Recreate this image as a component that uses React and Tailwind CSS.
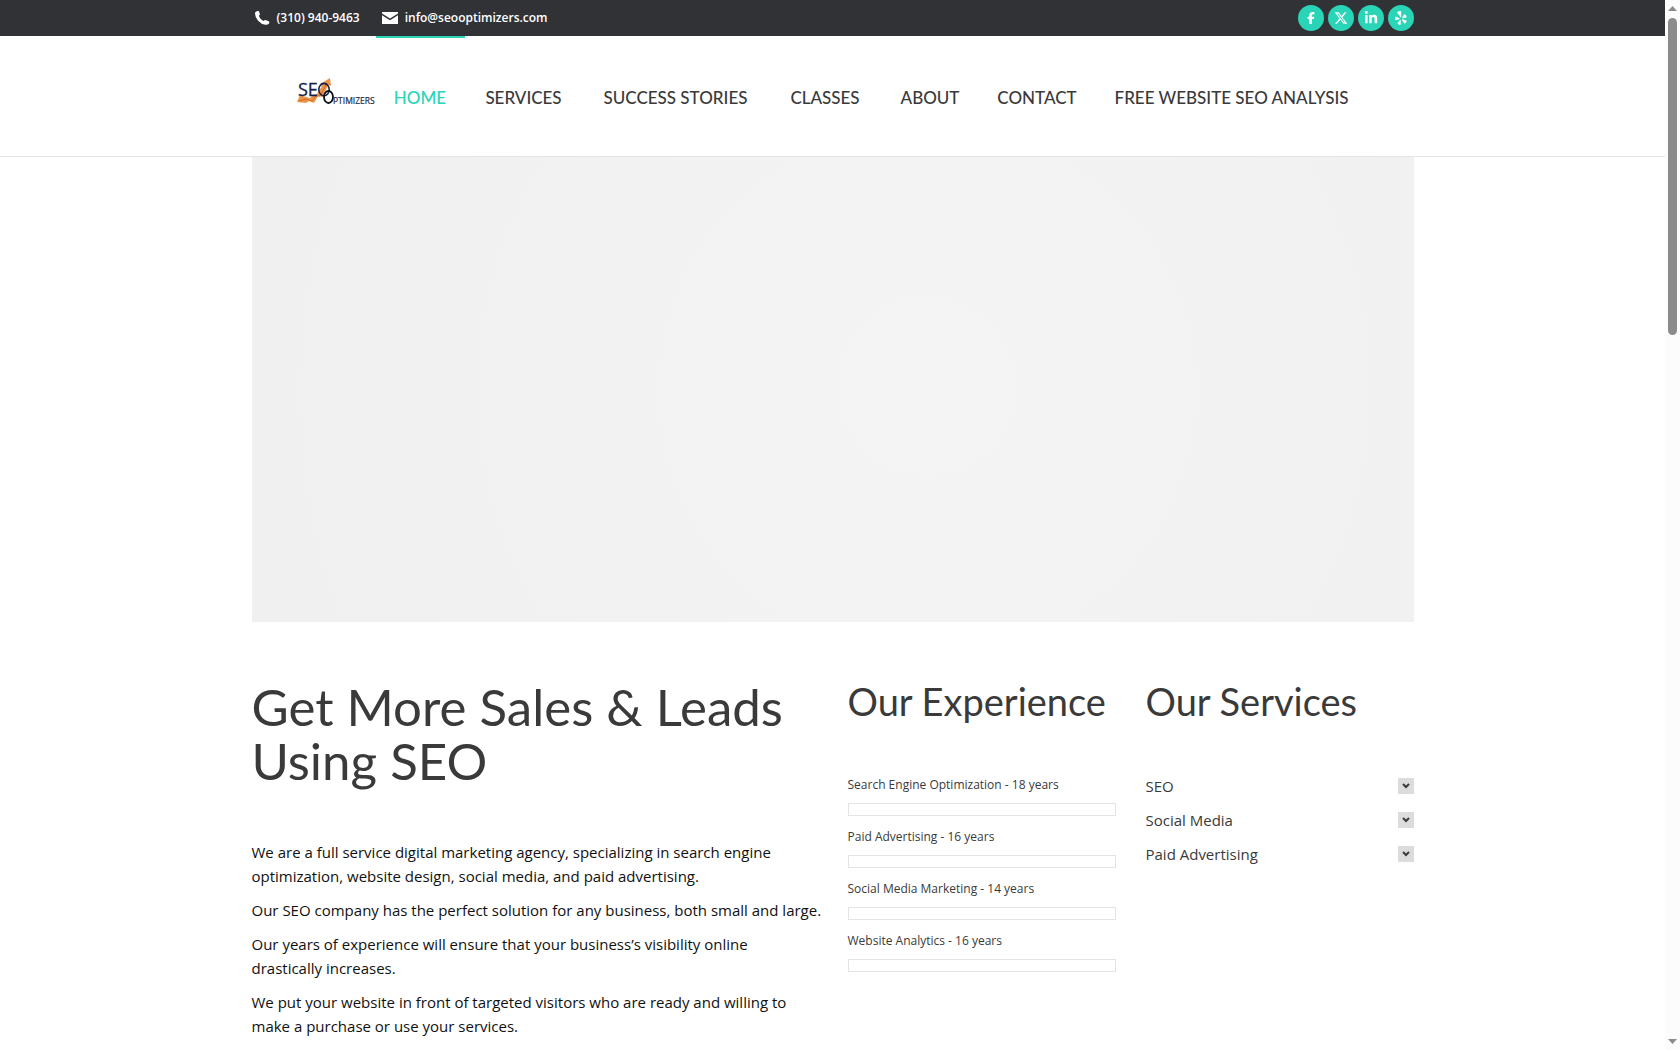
import { FaFacebookF, FaLinkedinIn, FaXTwitter } from 'react-icons/fa6'

const navItems = [
  { label: 'HOME', width: 'w-[89px]', active: true },
  { label: 'SERVICES', width: 'w-[118px]' },
  { label: 'SUCCESS STORIES', width: 'w-[186px]' },
  { label: 'CLASSES', width: 'w-[113px]' },
  { label: 'ABOUT', width: 'w-[97px]' },
  { label: 'CONTACT', width: 'w-[117px]' },
  { label: 'FREE WEBSITE SEO ANALYSIS', width: 'w-[272px]' },
]

const socials = [
  { name: 'Facebook', Icon: FaFacebookF, size: 'size-3' },
  { name: 'X', Icon: FaXTwitter, size: 'size-[14px]' },
  { name: 'LinkedIn', Icon: FaLinkedinIn, size: 'size-[14px]' },
  { name: 'Yelp', Icon: YelpIcon, size: 'size-[14px]' },
]

const paragraphs = [
  'We are a full service digital marketing agency, specializing in search engine optimization, website design, social media, and paid advertising.',
  'Our SEO company has the perfect solution for any business, both small and large.',
  'Our years of experience will ensure that your business’s visibility online drastically increases.',
  'We put your website in front of targeted visitors who are ready and willing to make a purchase or use your services.',
]

const experience = [
  'Search Engine Optimization - 18 years',
  'Paid Advertising - 16 years',
  'Social Media Marketing - 14 years',
  'Website Analytics - 16 years',
]

const services = ['SEO', 'Social Media', 'Paid Advertising']

function Container({ className = '', children }) {
  return <div className={`mx-auto w-full max-w-[1250px] px-11 ${className}`}>{children}</div>
}

function YelpIcon({ className }) {
  return (
    <svg viewBox="0 0 14 14" className={className} fill="currentColor" aria-hidden="true">
      <path d="M3 1.200Q5 0 6.800.1 7.200.2 7.200 1V5.800Q7 6.600 6.300 6Z" />
      <path d="M1.400 5.600 5.400 7.200Q6 7.700 5.400 8.200L1.600 9.200Q1 9.200 1 8.400.9 6.800 1.400 5.600Z" />
      <path d="M6.700 9.200V13.300Q6.600 14 5.900 13.900 4.500 13.600 3.600 12.800 3.200 12.400 3.600 12L6 9Q6.500 8.600 6.700 9.200Z" />
      <path d="M8.200 6.400 10 3.600Q10.400 3 11 3.500 12.100 4.500 12.600 5.700 12.700 6.200 12.200 6.400L8.700 7.200Q8.100 7 8.200 6.400Z" />
      <path d="M8.500 8.300 12.200 9.400Q12.800 9.700 12.600 10.200 12 11.500 11 12.400 10.500 12.800 10.100 12.300L8 9.200Q7.800 8.400 8.500 8.300Z" />
    </svg>
  )
}

function PhoneIcon() {
  return (
    <svg viewBox="0 0 15 14" className="h-3.5 w-[15px]" fill="currentColor" aria-hidden="true">
      <path d="M1.200.5Q2.800-.3 4 .3L4.900 3.200Q5 4.100 4 4.600 4 6.100 5.300 7.600 6.800 9.300 8.700 9.900 9.500 8.900 10.300 9L13.800 10.300Q14.800 10.900 14 12.400 12.900 13.900 10.400 13.700 6.200 13.200 3.100 9.700 0 6 0 2.500 0 1.200 1.200.5Z" />
    </svg>
  )
}

function Logo() {
  return (
    <svg viewBox="0 0 80 30" className="h-[30px] w-20" role="img" aria-label="SEO Optimizers">
      <path d="M1 26 L4 19 L10 21 L14 22 L17 19 L21 18 L26 10 L24 8 L34 2 L35 10 L32 9 L27 21 L22 20 L18 27 L13 25 L10 27 Z" fill="#ee9448" />
      <path d="M3 25 L10 23 L16 25 L20 20 L24 20 L31 7" fill="none" stroke="#d06c24" strokeWidth="1" />
      <text x="2" y="20" fontSize="18" fill="#14224a" stroke="#14224a" strokeWidth="0.3" className="font-['Open_Sans',sans-serif]">SE</text>
      <ellipse cx="28" cy="13.600" rx="5.200" ry="6.200" fill="none" stroke="#14224a" strokeWidth="1.600" />
      <ellipse cx="32.500" cy="21" rx="4.500" ry="6" fill="none" stroke="#0b0f1c" strokeWidth="1.800" />
      <text x="37" y="28" fontSize="8.5" fill="#1c2b4d" stroke="#1c2b4d" strokeWidth="0.2" className="font-['Open_Sans',sans-serif]">PTIMIZERS</text>
    </svg>
  )
}

function TopBar() {
  return (
    <div className="bg-[#313236] text-white">
      <Container className="flex h-9 items-center justify-between">
        <div className="flex items-center gap-[22px] pl-[3px] text-xs font-semibold">
          <a href="tel:3109409463" className="flex items-center gap-[7px]">
            <PhoneIcon />
            (310) 940-9463
          </a>
          <a href="mailto:info@seooptimizers.com" className="flex items-center gap-[7px]">
            <svg viewBox="0 0 16 12" className="h-3 w-4" fill="currentColor" aria-hidden="true">
              <path d="M0 0h16v1.500L8 6.500 0 1.500z" />
              <path d="M0 3.300l8 5 8-5V12H0z" />
            </svg>
            info@seooptimizers.com
          </a>
        </div>
        <div className="flex gap-1">
          {socials.map(({ name, Icon, size }) => (
            <a key={name} href="#" aria-label={name} className="flex size-[26px] items-center justify-center rounded-full bg-[#2ad4b7]">
              <Icon className={size} />
            </a>
          ))}
        </div>
      </Container>
    </div>
  )
}

function Header() {
  return (
    <header className="border-b border-[#e4e4e4] bg-white">
      <Container className="flex h-[120px]">
        <a href="#" className="ml-11 flex w-20 items-center pb-2.5">
          <Logo />
        </a>
        <nav className="flex font-['Lato',sans-serif] text-[17px] font-medium">
          {navItems.map((item) => (
            <a
              key={item.label}
              href="#"
              className={`flex items-center justify-center border-t-2 pt-0.5 whitespace-nowrap ${item.width} ${
                item.active ? 'border-[#2ad4b7] text-[#2ad4b7]' : 'border-transparent text-[#3a3a3a]'
              }`}
            >
              {item.label}
            </a>
          ))}
        </nav>
      </Container>
    </header>
  )
}

function ScrollBar() {
  return (
    <div className="flex w-[15px] shrink-0 flex-col items-center bg-[#fcfcfc] py-1.5" aria-hidden="true">
      <svg viewBox="0 0 9 5" className="h-[5px] w-[9px]" fill="#8b8b8b"><path d="M0 5 4.500 0 9 5z" /></svg>
      <div className="mt-[7px] h-[317px] w-[9px] rounded-full bg-[#8b8b8b]" />
      <svg viewBox="0 0 9 5" className="mt-auto h-[5px] w-[9px]" fill="#8b8b8b"><path d="M0 0h9L4.500 5z" /></svg>
    </div>
  )
}

export default function App() {
  return (
    <div className="flex h-screen overflow-hidden bg-white font-['Open_Sans',sans-serif]">
      <div className="min-w-0 flex-1 overflow-hidden">
        <TopBar />
        <Header />
        <main>
          <Container>
            <div className="aspect-[5/2] bg-[radial-gradient(circle_at_58%_50%,#f4f4f4,#f0f0f0)]" />
            <div className="grid grid-cols-4 gap-[30px] pt-[58px] text-[#3a3a3a]">
              <section className="col-span-2">
                <h1 className="font-['Lato',sans-serif] text-[51px] leading-[54px]">Get More Sales &amp; Leads Using SEO</h1>
                {/* text runs slightly into the gutter */}
                <div className="-mr-1 mt-[52px] space-y-2.5 text-[15px] leading-6 text-[#111]">
                  {paragraphs.map((p) => (
                    <p key={p}>{p}</p>
                  ))}
                </div>
              </section>

              <section>
                <h2 className="font-['Lato',sans-serif] text-[38px] leading-[42px] whitespace-nowrap">Our Experience</h2>
                <ul className="mt-[53px] text-xs leading-5">
                  {experience.map((label) => (
                    <li key={label} className="mb-[11px]">
                      <span>{label}</span>
                      <div role="progressbar" aria-label={label} aria-valuenow={0} className="mt-2 h-[13px] border border-[#e4e4e4]" />
                    </li>
                  ))}
                </ul>
              </section>

              <section>
                <h2 className="font-['Lato',sans-serif] text-[38px] leading-[42px] whitespace-nowrap">Our Services</h2>
                <div className="mt-[52px] space-y-2.5 text-[15px] leading-6">
                  {services.map((label) => (
                    <button key={label} type="button" aria-expanded="false" className="flex w-full items-center justify-between text-left">
                      {label}
                      <span className="flex size-4 items-center justify-center bg-[#dcdcdc]">
                        <svg viewBox="0 0 8 6" className="h-1.5 w-2" fill="none" stroke="#3a3a3a" strokeWidth="2" aria-hidden="true">
                          <path d="M1 1l3 3 3-3" />
                        </svg>
                      </span>
                    </button>
                  ))}
                </div>
              </section>
            </div>
          </Container>
        </main>
      </div>
      <ScrollBar />
    </div>
  )
}
